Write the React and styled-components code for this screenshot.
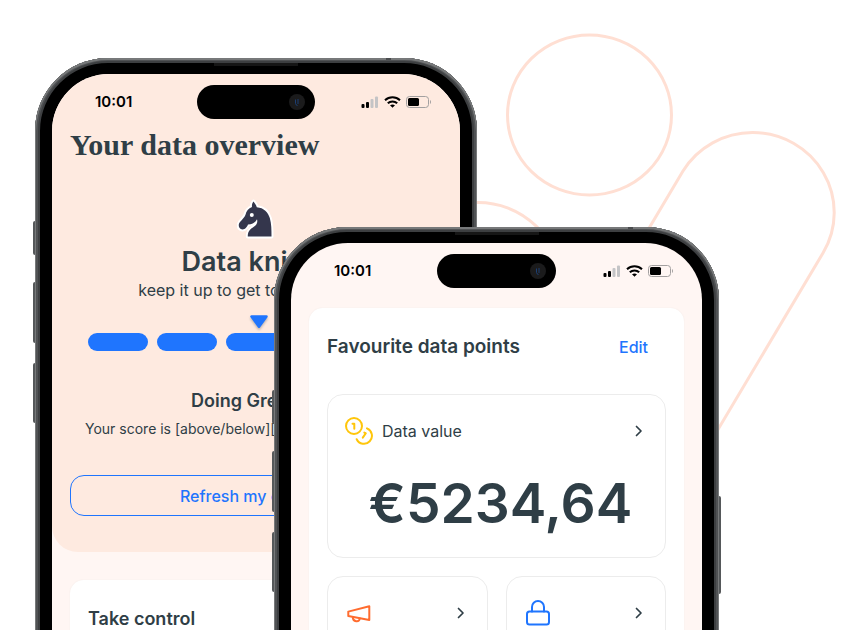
import React from "react";
import styled, { createGlobalStyle, css } from "styled-components";

const ink = "#2f3e46";
const blue = "#1f75fe";

const GlobalStyle = createGlobalStyle`
  *, *::before, *::after { box-sizing: border-box; }
  body {
    margin: 0;
    background: #fff;
    color: ${ink};
    font-family: Inter, "Liberation Sans", sans-serif;
  }
  h1, h2, h3, p { margin: 0; }
  button { font-family: inherit; cursor: pointer; }
`;

const Stage = styled.main`
  position: relative;
  display: grid;
  grid-template-columns: 239fr 203fr 242fr;
  height: 100vh;
  padding: 58px 136px 0 35px;
  overflow: hidden;
`;

const Backdrop = styled.svg`
  position: absolute;
  inset: 0;
  width: 100%;
  fill: none;
  stroke: #ffdfd3;
  stroke-width: 3;
`;

const Device = styled.article`
  position: relative;
  grid-row: 1;
  grid-column: ${(p) => (p.$front ? "2 / 4" : "1 / 3")};
  margin-top: ${(p) => (p.$front ? "169px" : "0")};
  padding: 16px 17px 0;
  border-radius: 73px 73px 0 0;
  background: #000;
  box-shadow:
    inset 0 0 0 1px #77797a,
    inset 0 1px 0 1px #77797a,
    inset 0 0 0 3px #505254,
    inset 0 0 0 5px #3d3f41;
`;

const SideKey = styled.span`
  position: absolute;
  top: ${(p) => p.$top}px;
  height: ${(p) => p.$length}px;
  width: 2px;
  background: #55585a;
  ${(p) =>
    p.$right
      ? css`right: -2px; border-radius: 0 2px 2px 0;`
      : css`left: -2px; border-radius: 2px 0 0 2px;`}
`;

const AntennaBand = styled.span`
  position: absolute;
  top: 0;
  right: 86px;
  width: 5px;
  height: 2px;
  background: #4a4c4e;
`;

const Earpiece = styled.span`
  position: absolute;
  top: 5px;
  left: 50%;
  width: 84px;
  height: 3px;
  margin-left: -42px;
  background: #161616;
`;

const Screen = styled.div`
  display: flex;
  flex-direction: column;
  height: 100%;
  border-radius: 57px 57px 0 0;
  background: #fff6f3;
  overflow: hidden;
`;

const StatusBar = styled.header`
  display: grid;
  grid-template-columns: 1fr 29% 1fr;
  align-items: center;
  padding-top: 11px;
  color: #000;
`;

const Time = styled.time`
  padding-left: 43px;
  font-size: 15px;
  line-height: 20px;
  font-weight: 600;
  text-align: left;
`;

const Island = styled.div`
  display: flex;
  justify-content: flex-end;
  align-items: center;
  height: 34px;
  padding-right: 10px;
  border-radius: 17px;
  background: #000;
`;

const Indicators = styled.div`
  display: flex;
  align-items: center;
  justify-content: flex-end;
  gap: 5px;
  padding-right: 29px;
`;

const Hero = styled.section`
  padding: 0 18px 36px;
  border-radius: 0 0 26px 26px;
  background: #feeae0;
  text-align: center;
`;

const HeroStatus = styled.div`
  margin: 0 -18px;
`;

const PageTitle = styled.h1`
  margin-top: 10px;
  font-family: "Liberation Serif", serif;
  font-size: 30px;
  line-height: 32px;
  font-weight: 700;
  text-align: left;
  white-space: nowrap;
`;

const Knight = styled.svg`
  display: block;
  width: 38px;
  height: 42px;
  margin: 37px auto 0;
`;

const Rank = styled.h2`
  margin-top: 6px;
  font-size: 27px;
  line-height: 32px;
  font-weight: 600;
`;

const Hint = styled.p`
  margin-top: 2px;
  font-size: 16px;
  line-height: 20px;
  white-space: nowrap;
`;

const Gauge = styled.div`
  margin-top: 15px;
  padding: 0 18px;
`;

const PointerTrack = styled.div`
  height: 18px;
`;

const Pointer = styled.svg`
  display: block;
  width: 20px;
  height: 16px;
  margin-left: -10px;
  filter: drop-shadow(0 2px 1px rgba(47, 62, 70, 0.3));
`;

const Segments = styled.div`
  display: grid;
  grid-template-columns: repeat(5, 1fr);
  gap: 9px;
`;

const Segment = styled.span`
  height: 18px;
  border-radius: 9px;
  background: ${(p) => (p.$filled ? blue : "#fff")};
`;

const Verdict = styled.h3`
  margin-top: 38px;
  font-size: 18px;
  line-height: 24px;
  font-weight: 600;
`;

const Score = styled.p`
  margin-top: 6px;
  padding-left: 15px;
  font-size: 14px;
  line-height: 20px;
  text-align: left;
  white-space: nowrap;
`;

const RefreshButton = styled.button`
  width: 100%;
  height: 41px;
  margin-top: 36px;
  border: 1px solid ${blue};
  border-radius: 14px;
  background: transparent;
  color: ${blue};
  font-size: 16px;
  font-weight: 500;
`;

const Panel = styled.section`
  flex: 1;
  margin: ${(p) => p.$gap}px 18px 0;
  padding: 27px 18px 0;
  border-radius: 14px 14px 0 0;
  background: #fff;
  box-shadow: 0 0 2px rgba(47, 62, 70, 0.06);
`;

const PanelHeader = styled.div`
  display: flex;
  align-items: center;
  justify-content: space-between;
  padding-right: 18px;
`;

const PanelTitle = styled.h2`
  font-size: ${(p) => (p.$large ? 19 : 18)}px;
  line-height: 24px;
  font-weight: 600;
  white-space: nowrap;
`;

const EditButton = styled.button`
  padding: 0;
  border: 0;
  background: none;
  color: ${blue};
  font-size: 16px;
  line-height: 24px;
  font-weight: 500;
`;

const Tiles = styled.div`
  display: grid;
  grid-template-columns: 1fr 1fr;
  gap: 18px;
  margin-top: 35px;
`;

const Tile = styled.article`
  grid-column: ${(p) => (p.$wide ? "1 / -1" : "auto")};
  padding: 22px 17px 26px;
  border: 1px solid #ececec;
  border-radius: 16px;
`;

const TileHeader = styled.div`
  display: flex;
  align-items: center;
  gap: 9px;
  height: 28px;
`;

const TileLabel = styled.h3`
  font-size: 16px;
  line-height: 20px;
  font-weight: 400;
`;

const OpenButton = styled.button`
  display: flex;
  margin-left: auto;
  padding: 2px;
  border: 0;
  background: none;
  color: ${ink};
`;

const Amount = styled.p`
  margin-top: 30px;
  padding-left: 8px;
  font-size: 55px;
  line-height: 56px;
  font-weight: 600;
  text-align: center;
`;

const strokeProps = {
  fill: "none",
  stroke: "currentColor",
  strokeWidth: 2,
  strokeLinecap: "round",
  strokeLinejoin: "round",
};

function Chevron() {
  return (
    <svg width="14" height="14" viewBox="0 0 14 14" {...strokeProps} strokeWidth="1.7">
      <path d="M4.5 2.5 9 7 4.5 11.5" />
    </svg>
  );
}

function Coins() {
  return (
    <svg width="28" height="28" viewBox="0 0 28 28" {...strokeProps} stroke="#ffc60b">
      <circle cx="9" cy="9" r="8" />
      <path d="M7.500 6.800h1.800v5" />
      <path d="M22 11.400a8 8 0 1 1-10.300 10.800" />
      <path d="M20.800 16.300 17.800 20.600M20.800 16.300 19.300 15.600" />
    </svg>
  );
}

function Megaphone() {
  return (
    <svg width="28" height="28" viewBox="0 0 28 28" {...strokeProps} stroke="#ff6c2f">
      <path d="M3.300 12.600 24.300 7.200V21L3.300 17z" />
      <path d="M7.800 18.200c0 5 6.500 5.300 7 1.300" />
    </svg>
  );
}

function Lock() {
  return (
    <svg width="28" height="28" viewBox="0 0 28 28" {...strokeProps} stroke={blue}>
      <rect x="3" y="12.500" width="22" height="13" rx="2.500" />
      <path d="M8 12.500V8a6 6 0 0 1 12 0v4.500" />
    </svg>
  );
}

function Camera() {
  return (
    <svg width="16" height="16" viewBox="0 0 16 16">
      <circle cx="8" cy="8" r="8" fill="#1b1b1c" />
      <path d="M6.500 5.500v4q0 1.500 2 2M9 5v5" stroke="#1d3f73" fill="none" />
    </svg>
  );
}

function Signal() {
  return (
    <svg width="18" height="12" viewBox="0 0 18 12">
      <rect x="0.500" y="8" width="3" height="4" rx="1" />
      <rect x="5" y="6" width="3" height="6" rx="1" />
      <rect x="9.500" y="3" width="3" height="9" rx="1" fill="#c4c4c6" />
      <rect x="14" y="0.500" width="3" height="11.500" rx="1" fill="#c4c4c6" />
    </svg>
  );
}

function Wifi() {
  return (
    <svg width="17" height="12" viewBox="0 0 17 12" fill="none" stroke="#000" strokeWidth="2">
      <path d="M1 4.300a10.800 10.800 0 0 1 15 0" />
      <path d="M3.800 7.300a6.800 6.800 0 0 1 9.400 0" />
      <path d="M6 9.300q2.500-1.800 5 0L8.500 11.800z" fill="#000" stroke="none" />
    </svg>
  );
}

function Battery() {
  return (
    <svg width="25" height="12" viewBox="0 0 25 12">
      <rect x="0.500" y="0.500" width="22" height="11" rx="3" fill="none" stroke="#a3a0a0" />
      <rect x="2" y="2" width="11" height="8" rx="1.500" />
      <path d="M24 4v4q1-.6 1-2t-1-2z" fill="#a3a0a0" />
    </svg>
  );
}

function PhoneStatus() {
  return (
    <StatusBar>
      <Time>10:01</Time>
      <Island>
        <Camera />
      </Island>
      <Indicators>
        <Signal />
        <Wifi />
        <Battery />
      </Indicators>
    </StatusBar>
  );
}

function Phone({ front, rightKey, children }) {
  return (
    <Device $front={front}>
      <SideKey $top={163} $length={34} />
      <SideKey $top={224} $length={61} />
      <SideKey $top={305} $length={60} />
      {rightKey && <SideKey $right $top={269} $length={98} />}
      <AntennaBand />
      <Earpiece />
      <Screen>{children}</Screen>
    </Device>
  );
}

function ScoreGauge({ value, filled }) {
  return (
    <Gauge role="img" aria-label="Data score">
      <PointerTrack style={{ paddingLeft: `${value}%` }}>
        <Pointer viewBox="0 0 20 16">
          <path d="M2.500 1.500h15L10 11.800z" fill={blue} stroke={blue} strokeWidth="2.500" strokeLinejoin="round" />
        </Pointer>
      </PointerTrack>
      <Segments>
        {[0, 1, 2, 3, 4].map((i) => (
          <Segment key={i} $filled={i < filled} />
        ))}
      </Segments>
    </Gauge>
  );
}

export default function App() {
  return (
    <>
      <GlobalStyle />
      <Stage>
        <Backdrop viewBox="0 0 855 630" aria-hidden="true">
          <ellipse cx="589.500" cy="115" rx="82" ry="80" />
          <ellipse cx="478" cy="282.500" rx="82" ry="80" />
          <path d="M604 304 683 171A81.500 80 0 0 1 752.500 132.500A81.500 80 0 0 1 823 253L660 527" />
        </Backdrop>

        <Phone>
          <Hero>
            <HeroStatus>
              <PhoneStatus />
            </HeroStatus>
            <PageTitle>Your data overview</PageTitle>
            <Knight viewBox="0 0 38 42" aria-hidden="true">
              <path
                d="M16.500 3.500C17.500 5.500 19.200 6.500 19.800 9.300 27 9.800 31 14.500 32.800 20 34.500 26 34.500 32 34.500 38.500H10.800C10.800 34.500 12 32 15.500 29.800 19.500 27.300 21 24.500 20 21.300 18.500 24.500 15.500 25.800 11 26.600 10 29 8.500 31.500 5.500 31.500 2.500 31 1.500 29 1.800 26.500 2.500 23 6.500 21.500 8.500 16.700 9.200 13 11.500 10.500 15 9 14.700 7 15.200 5 16.500 3.500z"
                fill="#34364c"
                stroke="#fff"
                strokeWidth="4"
                strokeLinejoin="round"
                paintOrder="stroke"
              />
              <circle cx="14.800" cy="17" r="2" fill="#fff" />
            </Knight>
            <Rank>Data knight</Rank>
            <Hint>keep it up to get to data queen!</Hint>
            <ScoreGauge value={51} filled={3} />
            <Verdict>Doing Great 🎉</Verdict>
            <Score>Your score is [above/below][%]</Score>
            <RefreshButton type="button">Refresh my data set</RefreshButton>
          </Hero>
          <Panel $gap={28}>
            <PanelTitle>Take control</PanelTitle>
          </Panel>
        </Phone>

        <Phone front rightKey>
          <PhoneStatus />
          <Panel $gap={20}>
            <PanelHeader>
              <PanelTitle $large>Favourite data points</PanelTitle>
              <EditButton type="button">Edit</EditButton>
            </PanelHeader>
            <Tiles>
              <Tile $wide>
                <TileHeader>
                  <Coins />
                  <TileLabel>Data value</TileLabel>
                  <OpenButton type="button" aria-label="Open data value">
                    <Chevron />
                  </OpenButton>
                </TileHeader>
                <Amount>€5234,64</Amount>
              </Tile>
              <Tile>
                <TileHeader>
                  <Megaphone />
                  <OpenButton type="button" aria-label="Open announcements">
                    <Chevron />
                  </OpenButton>
                </TileHeader>
              </Tile>
              <Tile>
                <TileHeader>
                  <Lock />
                  <OpenButton type="button" aria-label="Open privacy">
                    <Chevron />
                  </OpenButton>
                </TileHeader>
              </Tile>
            </Tiles>
          </Panel>
        </Phone>
      </Stage>
    </>
  );
}
